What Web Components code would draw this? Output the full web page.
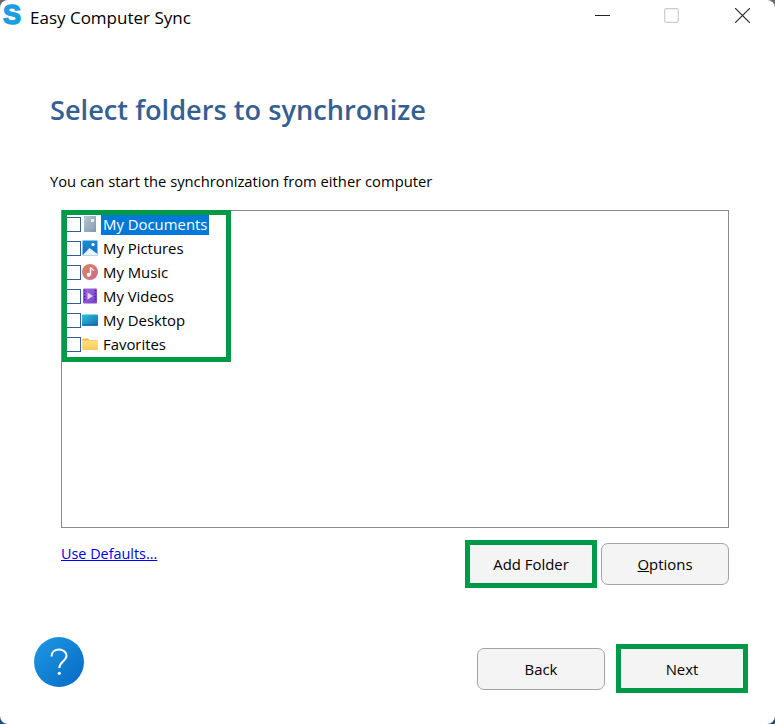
<!DOCTYPE html>
<html lang="en">
<head>
<meta charset="utf-8">
<title>Easy Computer Sync</title>
<style>
  html, body { margin: 0; height: 100%; }
  body {
    width: 775px;
    height: 724px;
    overflow: hidden;
    background: linear-gradient(#6a6a6a 0, #6a6a6a 50%, #1d4f8c 50%, #1d4f8c 100%);
    font-family: "Open Sans", "Noto Sans", sans-serif;
  }
</style>
</head>
<body>
<sync-window>
  <title-bar slot="title">Easy Computer Sync</title-bar>
  <span slot="heading">Select folders to synchronize</span>
  <span slot="hint">You can start the synchronization from either computer</span>
  <folder-list slot="list">
    <folder-item icon="documents" selected>My Documents</folder-item>
    <folder-item icon="pictures">My Pictures</folder-item>
    <folder-item icon="music">My Music</folder-item>
    <folder-item icon="videos">My Videos</folder-item>
    <folder-item icon="desktop">My Desktop</folder-item>
    <folder-item icon="favorites">Favorites</folder-item>
  </folder-list>
  <a slot="defaults" href="#">Use Defaults...</a>
  <wizard-button slot="actions" marked>Add Folder</wizard-button>
  <wizard-button slot="actions"><u>O</u>ptions</wizard-button>
  <help-button slot="help"></help-button>
  <wizard-button slot="nav">Back</wizard-button>
  <wizard-button slot="nav" marked style="--mark-top: -5px">Next</wizard-button>
</sync-window>

<script>
// Small folder icons, one per shell folder
const FOLDER_ICONS = {
  documents: `
    <defs><linearGradient id="g" x1="0" y1="0" x2="1" y2="1"><stop offset="0" stop-color="#b9c6d2"/><stop offset="1" stop-color="#7f97ae"/></linearGradient></defs>
    <rect x="2" y="0" width="12" height="16" fill="url(#g)"/>
    <rect x="9" y="3" width="3" height="3" fill="#e8eef3"/>
    <path d="M4 8h8M4 10h8M4 12h8" stroke="#9fb2c4" stroke-width="1"/>`,
  pictures: `
    <defs><linearGradient id="g" x1="0" y1="0" x2="0" y2="1"><stop offset="0" stop-color="#1b8ad8"/><stop offset="1" stop-color="#1670c4"/></linearGradient></defs>
    <rect x="0.5" y="0.5" width="15" height="15" fill="url(#g)"/>
    <circle cx="11" cy="4.5" r="1.6" fill="#fff"/>
    <path d="M0.5 15.5 L7.5 8 L15.5 14 V15.5Z" fill="#e9f3fb"/>`,
  music: `
    <defs><linearGradient id="g" x1="0" y1="0" x2="1" y2="1"><stop offset="0" stop-color="#e0805f"/><stop offset="1" stop-color="#c2708f"/></linearGradient></defs>
    <circle cx="8" cy="8" r="8" fill="url(#g)"/>
    <path d="M8.5 3.5V10.5" stroke="#fff" stroke-width="1.4"/>
    <path d="M8.5 3.5 C9.5 5.2 11.5 5 11.5 7" stroke="#fff" stroke-width="1.2" fill="none"/>
    <circle cx="6.7" cy="10.8" r="2" fill="#fff"/>`,
  videos: `
    <defs><linearGradient id="g" x1="0" y1="0" x2="1" y2="1"><stop offset="0" stop-color="#a268e0"/><stop offset="1" stop-color="#7443c6"/></linearGradient></defs>
    <rect x="1" y="0.5" width="14" height="15" rx="1" fill="url(#g)"/>
    <path d="M2 2.5h1.5M2 5.5h1.5M2 8.5h1.5M2 11.5h1.5M12.5 2.5H14M12.5 5.5H14M12.5 8.5H14M12.5 11.5H14" stroke="#4a2a92" stroke-width="1.5"/>
    <path d="M5.5 4.5 L11 8 L5.5 11.5Z" fill="#e3d6f7"/>`,
  desktop: `
    <defs><linearGradient id="g" x1="0" y1="0" x2="1" y2="1"><stop offset="0" stop-color="#2cc0da"/><stop offset="1" stop-color="#0f6fb4"/></linearGradient></defs>
    <rect x="0" y="2.5" width="16" height="11" rx="1" fill="url(#g)"/>
    <rect x="0" y="12.5" width="16" height="1.2" fill="#0b5c96"/>`,
  favorites: `
    <defs><linearGradient id="g" x1="0" y1="0" x2="0" y2="1"><stop offset="0" stop-color="#fde08a"/><stop offset="1" stop-color="#fbcb55"/></linearGradient></defs>
    <path d="M0.5 2.5 h5.5 l1.5 1.5 h8 v9.5 h-15z" fill="#f5b93c"/>
    <rect x="0.5" y="4.5" width="15" height="9.5" fill="url(#g)"/>`
};

class SyncWindow extends HTMLElement {
  constructor() {
    super();
    this.attachShadow({ mode: 'open' });
    this.shadowRoot.innerHTML = `
      <style>
        :host {
          display: flex;
          flex-direction: column;
          width: 775px;
          height: 724px;
          box-sizing: border-box;
          background: #fff;
          border-radius: 8px;
          color: #000;
          font: 14.9px "Open Sans", "Noto Sans", sans-serif;
        }
        main { flex: 1; display: flex; flex-direction: column; padding: 0 46px 34px 50px; }
        h1 {
          margin: 58px 0 0;
          height: 36px;
          line-height: 36px;
          font-size: 27.2px;
          font-weight: 600;
          color: #365f91;
        }
        .hint { margin-top: 43px; height: 20px; line-height: 20px; font-size: 14.75px; }
        .list { margin: 19px 0 0 11px; }
        .row { display: flex; justify-content: space-between; margin: 15px 0 0 11px; }
        .defaults { padding-top: 1px; line-height: 20px; font-size: 14.4px; }
        ::slotted(a) { color: #0000ee; text-decoration: underline; }
        .actions { display: flex; gap: 6px; }
        footer { margin-top: auto; display: flex; align-items: flex-end; margin-left: -16px; }
        .nav { margin-left: auto; margin-right: -17px; display: flex; gap: 13px; }
      </style>
      <slot name="title"></slot>
      <main>
        <h1><slot name="heading"></slot></h1>
        <div class="hint"><slot name="hint"></slot></div>
        <div class="list"><slot name="list"></slot></div>
        <div class="row">
          <div class="defaults"><slot name="defaults"></slot></div>
          <div class="actions"><slot name="actions"></slot></div>
        </div>
        <footer>
          <slot name="help"></slot>
          <div class="nav"><slot name="nav"></slot></div>
        </footer>
      </main>
    `;
  }
}

class TitleBar extends HTMLElement {
  constructor() {
    super();
    this.attachShadow({ mode: 'open' });
    this.shadowRoot.innerHTML = `
      <style>
        :host { display: flex; align-items: center; height: 34px; flex: none; padding-left: 3px; }
        .logo {
          width: 21px;
          height: 26px;
          margin: -4px 6px 0 0;
          padding-left: 0;
          flex: none;
          font: 700 27px/26px "Liberation Sans", sans-serif;
          color: #1d9ce0;
          -webkit-text-stroke: 1.5px #1d9ce0;
        }
        .title { font-size: 17px; white-space: nowrap; }
        .controls { margin-left: auto; margin-top: -3px; padding-right: 25px; display: flex; align-items: center; }
        svg.ctl { width: 15px; height: 15px; display: block; margin-left: 54px; }
        svg.ctl.close { margin-left: 56px; }
      </style>
      <span class="logo">S</span>
      <span class="title"><slot></slot></span>
      <div class="controls">
        <svg class="ctl" viewBox="0 0 15 15"><path d="M0 7.5h15" stroke="#222" stroke-width="1"/></svg>
        <svg class="ctl" viewBox="0 0 15 15"><rect x="0.7" y="0.7" width="13.6" height="13.6" rx="1.5" fill="none" stroke="#ccc" stroke-width="1.2"/></svg>
        <svg class="ctl close" viewBox="0 0 15 15"><path d="M0 0L15 15M15 0L0 15" stroke="#222" stroke-width="1.1"/></svg>
      </div>
    `;
  }
}

class FolderList extends HTMLElement {
  constructor() {
    super();
    this.attachShadow({ mode: 'open' });
    this.shadowRoot.innerHTML = `
      <style>
        :host {
          display: block;
          position: relative;
          box-sizing: border-box;
          width: 668px;
          height: 318px;
          border: 1px solid #8a8a8a;
          padding: 2px 0 0 4px;
          background: #fff;
        }
        /* green annotation drawn over the list */
        .mark {
          position: absolute;
          left: 0;
          top: -1px;
          width: 169px;
          height: 152px;
          box-sizing: border-box;
          border: 5px solid #009a46;
          pointer-events: none;
        }
      </style>
      <slot></slot>
      <div class="mark"></div>
    `;
  }
}

class FolderItem extends HTMLElement {
  constructor() {
    super();
    this.attachShadow({ mode: 'open' });
    const icon = this.getAttribute('icon');
    this.shadowRoot.innerHTML = `
      <style>
        :host { display: flex; align-items: center; height: 24px; }
        .box {
          width: 13px;
          height: 13px;
          border: 1px solid #33609a;
          background: #fff;
          margin: -2px 1px 0 0;
          flex: none;
        }
        svg { width: 16px; height: 16px; flex: none; margin-top: -2px; }
        .label { margin: -1px 0 0 3px; padding: 0 2px; line-height: 20px; height: 21px; white-space: nowrap; }
        :host([selected]) .label { background: #0078d7; color: #fff; }
      </style>
      <span class="box"></span>
      <svg viewBox="0 0 16 16">${FOLDER_ICONS[icon]}</svg>
      <span class="label"><slot></slot></span>
    `;
  }
}

class WizardButton extends HTMLElement {
  constructor() {
    super();
    this.attachShadow({ mode: 'open' });
    this.shadowRoot.innerHTML = `
      <style>
        :host {
          display: flex;
          position: relative;
          align-items: center;
          justify-content: center;
          box-sizing: border-box;
          width: 128px;
          height: 42px;
          background: #f4f4f4;
          border: 1px solid #a3a3a3;
          border-radius: 7px;
        }
        /* green annotation drawn over the button */
        :host([marked]) { border-color: transparent; }
        :host([marked]) .mark {
          position: absolute;
          left: -3px;
          right: -3px;
          top: var(--mark-top, -4px);
          bottom: -4px;
          border: 5px solid #009a46;
        }
      </style>
      <slot></slot>
      <span class="mark"></span>
    `;
  }
}

class HelpButton extends HTMLElement {
  constructor() {
    super();
    this.attachShadow({ mode: 'open' });
    this.shadowRoot.innerHTML = `
      <style>
        :host { display: block; width: 50px; height: 50px; margin-bottom: 3px; }
        svg { display: block; width: 50px; height: 50px; }
      </style>
      <svg viewBox="0 0 50 50">
        <defs><linearGradient id="h" x1="0" y1="0" x2="1" y2="1"><stop offset="0" stop-color="#2099e4"/><stop offset="1" stop-color="#0569c4"/></linearGradient></defs>
        <circle cx="25" cy="25" r="25" fill="url(#h)"/>
        <path d="M17.5 19.5 C17.5 15 21 12.5 25 12.5 C29 12.5 32.5 15 32.5 18.8 C32.5 24 25.3 24.5 25.3 31" fill="none" stroke="#fff" stroke-width="2"/>
        <circle cx="25.3" cy="36.3" r="1.6" fill="#fff"/>
      </svg>
    `;
  }
}

customElements.define('sync-window', SyncWindow);
customElements.define('title-bar', TitleBar);
customElements.define('folder-list', FolderList);
customElements.define('folder-item', FolderItem);
customElements.define('wizard-button', WizardButton);
customElements.define('help-button', HelpButton);
</script>
</body>
</html>
